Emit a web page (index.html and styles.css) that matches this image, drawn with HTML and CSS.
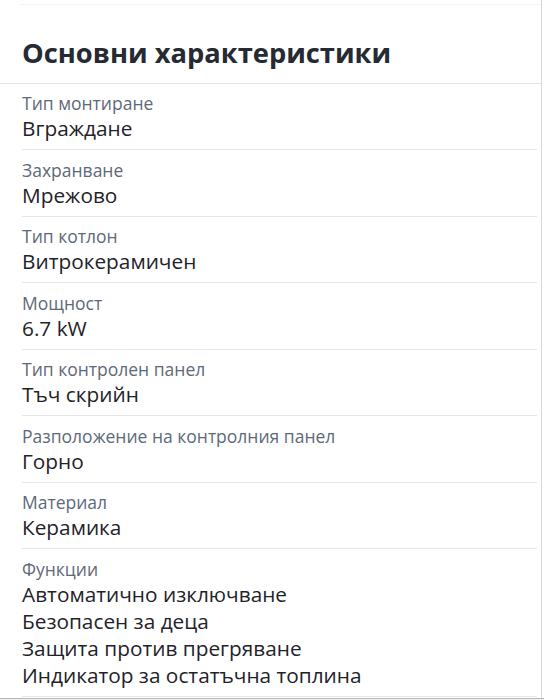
FILE: index.html
```html
<!DOCTYPE html>
<html lang="bg">
<head>
<meta charset="utf-8">
<title>Основни характеристики</title>
<link rel="stylesheet" href="styles.css">
</head>
<body>
<section class="card">
  <div class="top-fade"></div>
  <h2 class="title">Основни характеристики</h2>
  <dl class="specs">
    <div class="row"><dt>Тип монтиране</dt><dd>Вграждане</dd></div>
    <div class="row"><dt>Захранване</dt><dd>Мрежово</dd></div>
    <div class="row"><dt>Тип котлон</dt><dd>Витрокерамичен</dd></div>
    <div class="row"><dt>Мощност</dt><dd>6.7 kW</dd></div>
    <div class="row"><dt>Тип контролен панел</dt><dd>Тъч скрийн</dd></div>
    <div class="row"><dt>Разположение на контролния панел</dt><dd>Горно</dd></div>
    <div class="row"><dt>Материал</dt><dd>Керамика</dd></div>
    <div class="row"><dt>Функции</dt><dd>Автоматично изключване</dd><dd>Безопасен за деца</dd><dd>Защита против прегряване</dd><dd>Индикатор за остатъчна топлина</dd></div>
  </dl>
</section>
<div class="next"></div>
</body>
</html>
```
FILE: styles.css
```css
html, body {
  margin: 0;
  padding: 0;
  background: #ffffff;
}
body {
  font-family: "Open Sans", "Noto Sans", sans-serif;
  color: #1f2329;
  width: 544px;
  overflow: hidden;
}
.card {
  width: 541px;
  border-right: 1px solid #d9d9d9;
  background: #fff;
  padding-bottom: 1px;
}
.top-fade {
  height: 4px;
  border-bottom: 1px solid #f3f3f3;
  margin: 0 0 0 20px;
}
.title {
  margin: 0;
  padding: 29px 22px 0 22px;
  height: 48.5px;
  font-size: 27.3px;
  line-height: 38px;
  font-weight: 700;
  color: #252a33;
  border-bottom: 1px solid #e2e2e2;
}
.specs {
  margin: 0;
  padding: 0 4px 0 22px;
}
.row {
  padding: 8.5px 0 7px;
  border-bottom: 1px solid #e6e6e6;
}
.row dt {
  font-size: 17.5px;
  line-height: 23px;
  color: #5e6978;
}
.row dd {
  margin: 0;
  font-size: 20.8px;
  line-height: 27px;
  font-weight: 500;
  color: #1f2329;
}
.next {
  border-top: 1px solid #b5b5b5;
  height: 10px;
  background: #f4f4f4;
}
```
